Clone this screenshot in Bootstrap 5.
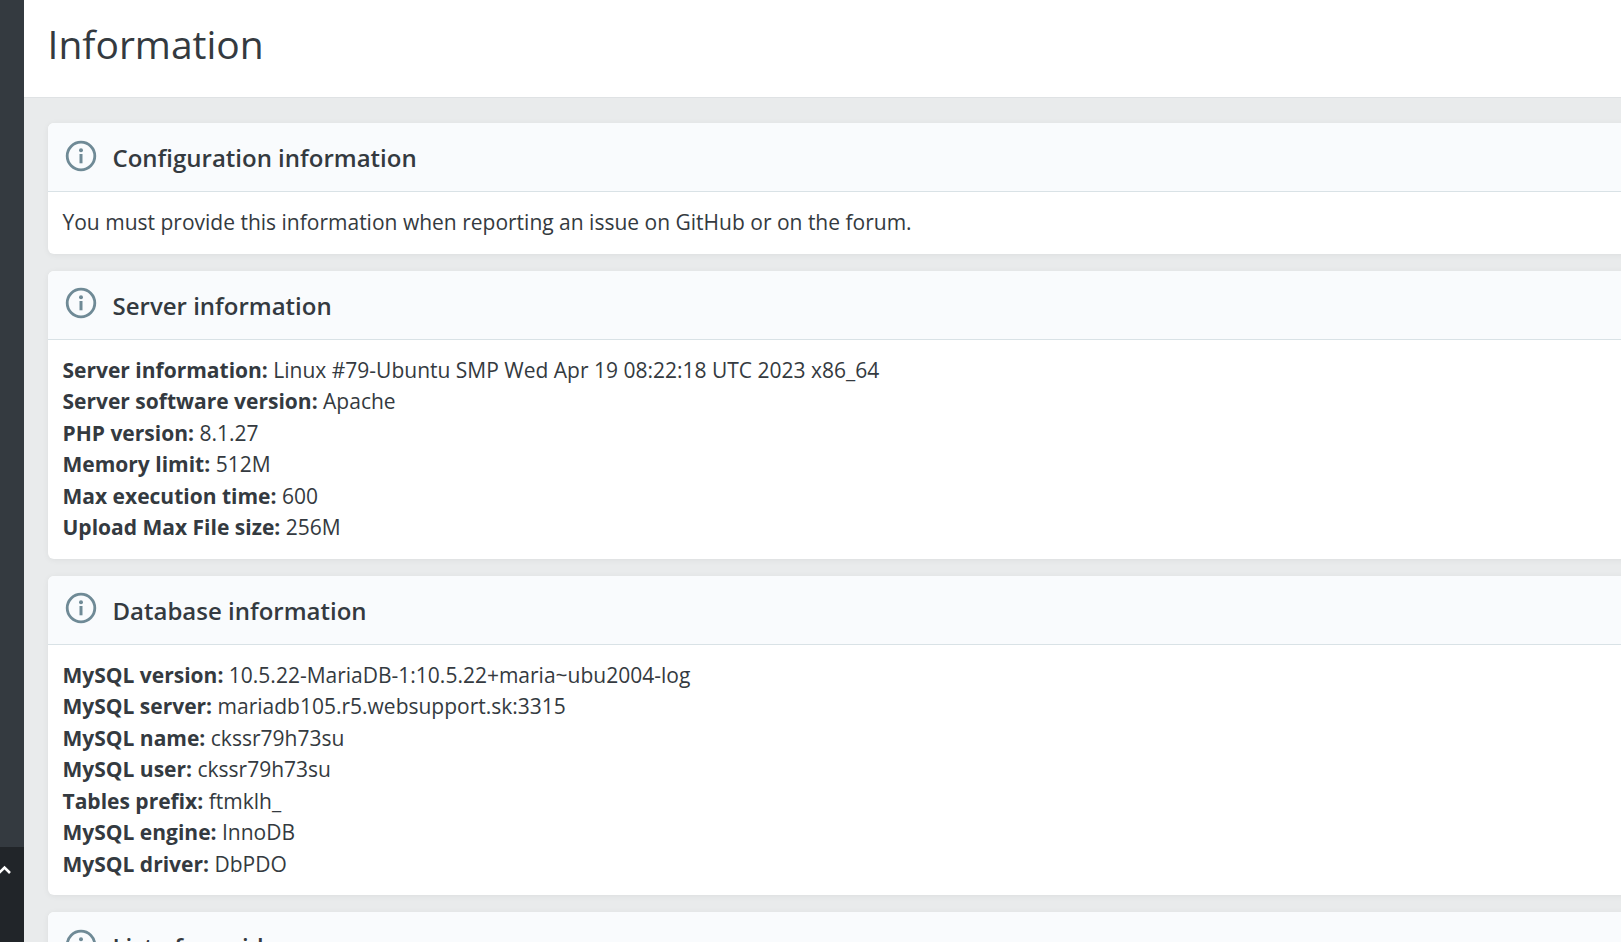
<!DOCTYPE html>
<html lang="en">
<head>
<meta charset="utf-8">
<title>Information</title>
<link href="https://cdn.jsdelivr.net/npm/bootstrap@5.3.0/dist/css/bootstrap.min.css" rel="stylesheet">
<style>
html,body{height:100%;overflow:hidden}
body{font-family:"Open Sans",sans-serif;font-size:21px;line-height:31.5px;color:#343a40;background:#e9ebec}
.shell{height:942px}
.rail{width:24px;background:#343a40}
.rail-toggle{height:95px;background:#212529;color:#fff}
.rail-toggle svg{display:block;margin-top:18px}
.page-head{height:98px;background:#fff;border-bottom:1px solid #dfe2e4;padding:20px 23.500px 0}
.page-head h1{font-size:39px;line-height:48px;font-weight:400;margin:0;color:#343a40}
.page-body{padding:25px 0 0 24px;margin-right:-30px}
.info-card{margin-bottom:17px;border:0;border-radius:6px;box-shadow:0 1px 6px rgba(0,0,20,.06);--bs-card-bg:#fff}
.info-head{height:69px;background:#f9fbfd;border-bottom:1px solid #d9e2e6;padding:0 16.500px;border-radius:6px 6px 0 0}
.info-head h2{font-size:24px;line-height:36px;font-weight:600;margin:2px 0 0 16px;color:#343a40}
.info-head svg{flex:none;color:#6f8a96;margin-top:-3px}
.info-content{padding:15px 14.500px}
.info-content b{font-weight:700}
</style>
</head>
<body>
<div class="shell d-flex">
  <aside class="rail d-flex flex-column justify-content-end flex-shrink-0">
    <div class="rail-toggle">
      <svg width="12" height="10" viewBox="0 0 12 10" fill="none" stroke="currentColor" stroke-width="2.600"><path d="M-1 8L4.500 2.500L10 8"/></svg>
    </div>
  </aside>
  <main class="flex-grow-1 overflow-hidden">
    <header class="page-head"><h1>Information</h1></header>
    <div class="page-body">
      <section class="card info-card">
        <div class="info-head d-flex align-items-center">
          <svg width="32" height="32" viewBox="0 0 32 32" fill="none" stroke="currentColor"><circle cx="16" cy="16" r="13.800" stroke-width="2.800"/><circle cx="16" cy="10.200" r="2" fill="currentColor" stroke="none"/><path d="M16 14V23.300" stroke-width="3"/></svg>
          <h2>Configuration information</h2>
        </div>
        <div class="info-content">You must provide this information when reporting an issue on GitHub or on the forum.</div>
      </section>
      <section class="card info-card">
        <div class="info-head d-flex align-items-center">
          <svg width="32" height="32" viewBox="0 0 32 32" fill="none" stroke="currentColor"><circle cx="16" cy="16" r="13.800" stroke-width="2.800"/><circle cx="16" cy="10.200" r="2" fill="currentColor" stroke="none"/><path d="M16 14V23.300" stroke-width="3"/></svg>
          <h2>Server information</h2>
        </div>
        <div class="info-content">
          <div><b>Server information:</b> Linux #79-Ubuntu SMP Wed Apr 19 08:22:18 UTC 2023 x86_64</div>
          <div><b>Server software version:</b> Apache</div>
          <div><b>PHP version:</b> 8.1.27</div>
          <div><b>Memory limit:</b> 512M</div>
          <div><b>Max execution time:</b> 600</div>
          <div><b>Upload Max File size:</b> 256M</div>
        </div>
      </section>
      <section class="card info-card">
        <div class="info-head d-flex align-items-center">
          <svg width="32" height="32" viewBox="0 0 32 32" fill="none" stroke="currentColor"><circle cx="16" cy="16" r="13.800" stroke-width="2.800"/><circle cx="16" cy="10.200" r="2" fill="currentColor" stroke="none"/><path d="M16 14V23.300" stroke-width="3"/></svg>
          <h2>Database information</h2>
        </div>
        <div class="info-content">
          <div><b>MySQL version:</b> 10.5.22-MariaDB-1:10.5.22+maria~ubu2004-log</div>
          <div><b>MySQL server:</b> mariadb105.r5.websupport.sk:3315</div>
          <div><b>MySQL name:</b> ckssr79h73su</div>
          <div><b>MySQL user:</b> ckssr79h73su</div>
          <div><b>Tables prefix:</b> ftmklh_</div>
          <div><b>MySQL engine:</b> InnoDB</div>
          <div><b>MySQL driver:</b> DbPDO</div>
        </div>
      </section>
      <section class="card info-card">
        <div class="info-head d-flex align-items-center">
          <svg width="32" height="32" viewBox="0 0 32 32" fill="none" stroke="currentColor"><circle cx="16" cy="16" r="13.800" stroke-width="2.800"/><circle cx="16" cy="10.200" r="2" fill="currentColor" stroke="none"/><path d="M16 14V23.300" stroke-width="3"/></svg>
          <h2>List of providers</h2>
        </div>
      </section>
    </div>
  </main>
</div>
<script src="https://cdn.jsdelivr.net/npm/bootstrap@5.3.0/dist/js/bootstrap.bundle.min.js"></script>
</body>
</html>
